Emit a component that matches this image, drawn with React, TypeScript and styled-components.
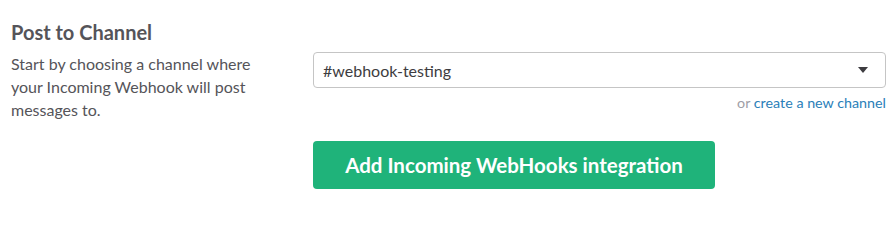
import styled, { createGlobalStyle } from "styled-components";

const GlobalStyle = createGlobalStyle`
  html, body {
    margin: 0;
    padding: 0;
    background: #fff;
  }
  body {
    font-family: Lato, "Helvetica Neue", Arial, sans-serif;
    -webkit-font-smoothing: antialiased;
  }
`;

const Section = styled.section`
  display: grid;
  grid-template-columns: 302px 573px;
  padding: 20px 0 0 11px;
`;

const Intro = styled.div`
  display: flex;
  flex-direction: column;
`;

const Title = styled.h2`
  margin: 0;
  font-size: 20px;
  line-height: 24px;
  font-weight: 700;
  color: #555459;
`;

const Description = styled.p`
  margin: 8px 0 0;
  font-size: 16px;
  line-height: 23px;
  color: #555459;
  width: 250px;
`;

const Controls = styled.div`
  display: flex;
  flex-direction: column;
  padding-top: 32px;
`;

const Select = styled.div`
  height: 36px;
  box-sizing: border-box;
  border: 1px solid #c5c5c5;
  border-radius: 4px;
  display: flex;
  align-items: center;
  justify-content: space-between;
  padding: 0 17px 0 9px;
  font-size: 16px;
  color: #3d3c40;
`;

const Caret = styled.span`
  width: 0;
  height: 0;
  border-left: 5px solid transparent;
  border-right: 5px solid transparent;
  border-top: 6px solid #3d3c40;
`;

const Hint = styled.div`
  margin-top: 5px;
  text-align: right;
  font-size: 14.3px;
  line-height: 20px;
  color: #9e9ea6;
`;

const Link = styled.a`
  color: #2a80b9;
  text-decoration: none;
`;

const SubmitButton = styled.button`
  margin-top: 28px;
  width: 402px;
  height: 48px;
  border: none;
  border-radius: 4px;
  background: #1fb37a;
  color: #fff;
  font-family: inherit;
  font-size: 20.5px;
  font-weight: 700;
  cursor: pointer;
`;

export default function App() {
  return (
    <>
      <GlobalStyle />
      <Section>
        <Intro>
          <Title>Post to Channel</Title>
          <Description>
            Start by choosing a channel where your Incoming Webhook will post
            messages to.
          </Description>
        </Intro>
        <Controls>
          <Select>
            <span>#webhook-testing</span>
            <Caret />
          </Select>
          <Hint>
            or <Link href="#">create a new channel</Link>
          </Hint>
          <SubmitButton>Add Incoming WebHooks integration</SubmitButton>
        </Controls>
      </Section>
    </>
  );
}
